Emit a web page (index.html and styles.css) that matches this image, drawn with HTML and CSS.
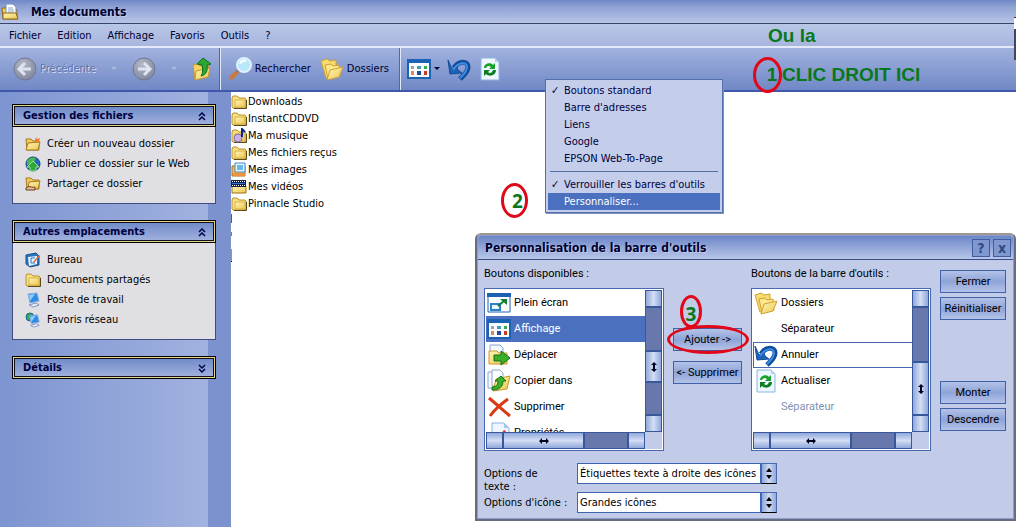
FILE: index.html
```html
<!DOCTYPE html>
<html lang="fr">
<head>
  <meta charset="UTF-8">
  <meta name="viewport" content="width=device-width, initial-scale=1.0">
  <title>Mes documents</title>
  <link rel="stylesheet" href="styles.css">
</head>
<body>
  <!-- Shared icons -->
  <svg class="sprite" aria-hidden="true">
    <defs>
      <linearGradient id="gold" x1="0" y1="0" x2="1" y2="1">
        <stop offset="0" stop-color="#fff6b8"/>
        <stop offset="1" stop-color="#ecc650"/>
      </linearGradient>
      <radialGradient id="disc" cx="0.4" cy="0.3" r="0.8">
        <stop offset="0" stop-color="#b4b8c6"/>
        <stop offset="1" stop-color="#7c839c"/>
      </radialGradient>
      <symbol id="folder" viewBox="0 0 16 16">
        <path d="M1 4l1-2h4l2 2h6l1 1v8l-1 1H2l-1-1z" fill="#f8e07c" stroke="#b89030"/>
        <path d="M4 6h10v7H4z" fill="url(#gold)" stroke="#d8b048"/>
        <path d="M15.500 6v8.500H3" fill="none" stroke="#5c4c1c"/>
      </symbol>
      <symbol id="folders" viewBox="0 0 24 24">
        <path d="M1 4l6-2 3 2 6-1v4l2 12-12 2z" fill="#f8dc70" stroke="#d0a030"/>
        <path d="M5 8l6-1 2 2 6-1 1 11-12 3z" fill="#fbe78c" stroke="#d0a030"/>
        <path d="M10 13l13-3-4 10-12 3z" fill="url(#gold)" stroke="#d0a030"/>
      </symbol>
      <symbol id="views" viewBox="0 0 24 20">
        <path d="M1 1h22v18H1z" fill="#f8fbff" stroke="#1c62b4" stroke-width="2"/>
        <path d="M0 0h24v4H0z" fill="#1c62b4"/>
        <path d="M4 7h3v3H4z" fill="#a0a0a8"/>
        <path d="M4 12h3v4H4z" fill="#e08850"/>
        <path d="M10 7h4v3h-4z" fill="#4498b0"/>
        <path d="M10 12h4v4h-4z" fill="#204c9c"/>
        <path d="M17 7h3v3h-3z" fill="#38a848"/>
        <path d="M17 12h3v4h-3z" fill="#c83c20"/>
      </symbol>
      <symbol id="undo" viewBox="0 0 24 24">
        <path d="M7 11C12 3 21 4 21 10c0 5-4 8-8 12" fill="none" stroke="#124c9c" stroke-width="5"/>
        <path d="M1 3l2 14 12-1-4-3-1-3-5 2z" fill="#1e62b8" stroke="#124c9c"/>
        <path d="M6 13C11 5 20 4 20 10c0 5-4 8-7 11" fill="none" stroke="#3c8ce0" stroke-width="2"/>
      </symbol>
      <symbol id="refresh" viewBox="0 0 20 24">
        <path d="M1 1h14l4 4v18H1z" fill="#eef6ff" stroke="#8cb4e0"/>
        <path d="M15 1v4h4z" fill="#b4d0f0"/>
        <path d="M4 11c0-5 7-6 9-3l2-2v6h-6l2-2c-2-2-4-1-5 1z" fill="#18a028"/>
        <path d="M16 13c0 6-7 7-10 4l-2 2v-6h6l-2 2c2 2 4 1 5-2z" fill="#0c8020"/>
      </symbol>
      <symbol id="updown" viewBox="0 0 8 12">
        <path d="M4 1l3 3H5v4h2l-3 3-3-3h2V4H1z" fill="#000020"/>
      </symbol>
      <symbol id="leftright" viewBox="0 0 12 8">
        <path d="M1 4l3-3v2h4V1l3 3-3 3V5H4v2z" fill="#000020"/>
      </symbol>
      <symbol id="chevrons" viewBox="0 0 8 9">
        <path d="M1 4l3-3 3 3M1 8l3-3 3 3" fill="none" stroke="#00004c" stroke-width="1.500"/>
      </symbol>
      <symbol id="monitor" viewBox="0 0 16 16">
        <path d="M3 2l9-1 2 8-9 2z" fill="#2c8ce8" stroke="#90acd8"/>
        <path d="M4 3l6-1-5 7z" fill="#8cd0ff"/>
        <path d="M4 13l7-2 3 2-6 2z" fill="#e8ecf8" stroke="#8494bc"/>
      </symbol>
    </defs>
  </svg>

  <header class="title-bar">
    <svg class="icon-18" viewBox="0 0 18 18">
      <path d="M1 5h5l1 2h9v9H2z" fill="#f0cc58" stroke="#906818"/>
      <path d="M5 1h7l3 3v8H5z" fill="#fff" stroke="#708cc0"/>
      <path d="M7 5h5M7 7h6M7 9h6" stroke="#88a4d0"/>
      <path d="M2 10h13l2 6H2z" fill="url(#gold)" stroke="#906818"/>
    </svg>
    <h1>Mes documents</h1>
  </header>

  <nav class="menu-bar">
    <a href="#">Fichier</a>
    <a href="#">Edition</a>
    <a href="#">Affichage</a>
    <a href="#">Favoris</a>
    <a href="#">Outils</a>
    <a href="#">?</a>
  </nav>

  <div class="toolbar">
    <div class="tool-group nav-tools">
      <button class="tool" disabled>
        <svg class="icon-24" viewBox="0 0 24 24">
          <circle cx="12" cy="12" r="11" fill="url(#disc)" stroke="#707890"/>
          <path d="M18 12H7M12 6l-6 6 6 6" fill="none" stroke="#e0e4f0" stroke-width="3"/>
        </svg>
        <span class="embossed">Précédente</span>
      </button>
      <svg class="drop pale" viewBox="0 0 6 4"><path d="M0 0h6L3 3z"/></svg>
      <button class="tool" aria-label="Suivante" disabled>
        <svg class="icon-24" viewBox="0 0 24 24">
          <circle cx="12" cy="12" r="11" fill="url(#disc)" stroke="#707890"/>
          <path d="M6 12h11M12 6l6 6-6 6" fill="none" stroke="#e0e4f0" stroke-width="3"/>
        </svg>
      </button>
      <svg class="drop pale" viewBox="0 0 6 4"><path d="M0 0h6L3 3z"/></svg>
      <button class="tool" aria-label="Dossier parent">
        <svg class="icon-20" viewBox="0 0 20 24">
          <path d="M1 8l5-1 2 2 8-1 1 10-14 4z" fill="#f4d464" stroke="#c89828"/>
          <path d="M4 14l14-3-2 9-13 3z" fill="url(#gold)" stroke="#c89828"/>
          <path d="M5 7l6-6 8 6-4 1c1 6-1 10-6 11 2-3 2-7 1-11z" fill="#28a830" stroke="#107018"/>
        </svg>
      </button>
    </div>
    <div class="tool-group search-tools">
      <button class="tool">
        <svg class="icon-24" viewBox="0 0 24 24">
          <path d="M2 22l8-8" stroke="#d07838" stroke-width="4"/>
          <path d="M9 15l3-3" stroke="#6c84b8" stroke-width="3"/>
          <circle cx="16" cy="8" r="7" fill="#b8e8fc" stroke="#e0f0ff" stroke-width="2"/>
          <path d="M12 7c1-3 4-4 6-3" fill="none" stroke="#fff" stroke-width="2"/>
        </svg>
        Rechercher
      </button>
      <button class="tool">
        <svg class="icon-24"><use href="#folders"/></svg>
        Dossiers
      </button>
    </div>
    <div class="tool-group view-tools">
      <button class="tool" aria-label="Affichage">
        <svg class="icon-24"><use href="#views"/></svg>
        <svg class="drop" viewBox="0 0 6 4"><path d="M0 0h6L3 3z"/></svg>
      </button>
      <button class="tool" aria-label="Annuler"><svg class="icon-24"><use href="#undo"/></svg></button>
      <button class="tool" aria-label="Actualiser"><svg class="icon-24"><use href="#refresh"/></svg></button>
    </div>
  </div>

  <main class="content">
    <aside class="sidebar">
      <section class="panel">
        <h2>Gestion des fichiers <svg class="chevron"><use href="#chevrons"/></svg></h2>
        <ul class="tasks">
          <li><svg class="icon-16" viewBox="0 0 16 16">
            <path d="M1 3h5l2 2h6v9H2z" fill="#f0cc58" stroke="#a87820"/>
            <path d="M3 7l12-1-2 8H1z" fill="url(#gold)" stroke="#a87820"/>
            <path d="M11 1l1 2 3-1-1 3 1 2-3-1-2 1V4z" fill="#f08030"/>
          </svg><a href="#">Créer un nouveau dossier</a></li>
          <li><svg class="icon-16" viewBox="0 0 16 16">
            <circle cx="8" cy="8" r="7" fill="#2468c0" stroke="#184880"/>
            <path d="M2 5c2-4 7-4 9-3L9 6 5 8 2 9z" fill="#48b850"/>
            <path d="M8 5l6 6h-3v4H5v-4H2z" fill="#30a838" stroke="#a0e098"/>
          </svg><a href="#">Publier ce dossier sur le Web</a></li>
          <li><svg class="icon-16" viewBox="0 0 16 16">
            <path d="M1 2h5l2 2h6v9H2z" fill="#f0cc58" stroke="#a87820"/>
            <path d="M4 6l11-1-2 8H3z" fill="url(#gold)" stroke="#a87820"/>
            <path d="M1 12c3-3 5 0 9-1v3H1z" fill="#e8b890" stroke="#684020"/>
          </svg><a href="#">Partager ce dossier</a></li>
        </ul>
      </section>

      <section class="panel">
        <h2>Autres emplacements <svg class="chevron"><use href="#chevrons"/></svg></h2>
        <ul class="tasks">
          <li><svg class="icon-16" viewBox="0 0 16 16">
            <path d="M1 3l10-2 3 3v9l-9 2-4-3z" fill="#2878c0" stroke="#185090"/>
            <path d="M3 5l9-1v8l-8 2z" fill="#e8f4ff"/>
            <path d="M10 6H6v5h4" fill="none" stroke="#2878c0"/>
            <path d="M8 10l6-7 1 1-6 7z" fill="#d86838"/>
          </svg><a href="#">Bureau</a></li>
          <li><svg class="icon-16"><use href="#folder"/></svg><a href="#">Documents partagés</a></li>
          <li><svg class="icon-16"><use href="#monitor"/></svg><a href="#">Poste de travail</a></li>
          <li><svg class="icon-16" viewBox="0 0 16 16">
            <circle cx="5" cy="5" r="4" fill="#38a850" stroke="#186890"/>
            <use href="#monitor" x="2" y="2" width="14" height="14"/>
          </svg><a href="#">Favoris réseau</a></li>
        </ul>
      </section>

      <section class="panel">
        <h2>Détails <svg class="chevron flipped"><use href="#chevrons"/></svg></h2>
      </section>
    </aside>

    <ul class="files">
      <li><svg class="icon-16"><use href="#folder"/></svg>Downloads</li>
      <li><svg class="icon-16"><use href="#folder"/></svg>InstantCDDVD</li>
      <li><svg class="icon-16" viewBox="0 0 16 16">
        <use href="#folder"/>
        <circle cx="7" cy="10" r="4" fill="#c8b0e8" stroke="#8070b0"/>
        <path d="M11 9V1l3 3" fill="none" stroke="#102880" stroke-width="2"/>
      </svg>Ma musique</li>
      <li><svg class="icon-16"><use href="#folder"/></svg>Mes fichiers reçus</li>
      <li><svg class="icon-16" viewBox="0 0 16 16">
        <path d="M1 4h13v10H1z" fill="#f0c050" stroke="#a07018"/>
        <path d="M4 1h10v9H4z" fill="#eaf6ff" stroke="#3c88c8"/>
        <path d="M6 3h6v5H6z" fill="#68b8e8"/>
        <path d="M2 11h12v3H2z" fill="#f09040"/>
      </svg>Mes images</li>
      <li><svg class="icon-16" viewBox="0 0 16 16">
        <path d="M1 7h14v7H1z" fill="url(#gold)" stroke="#a07018"/>
        <path d="M0 1h15v7H0z" fill="#102050"/>
        <path d="M1 2.500h14M1 6.500h14" stroke="#fff" stroke-dasharray="1 1"/>
        <path d="M1 4h13v1H1z" fill="#3870d0"/>
      </svg>Mes vidéos</li>
      <li><svg class="icon-16"><use href="#folder"/></svg>Pinnacle Studio</li>
      <li><svg class="sliver" viewBox="0 0 2 54">
        <path d="M0 2h1v9H0z" fill="#506080"/>
        <path d="M0 20h1v4H0z" fill="#e04890"/>
        <path d="M0 37h1v12H0z" fill="#b89848"/>
        <path d="M0 49h1v1H0z" fill="#101010"/>
      </svg></li>
    </ul>
  </main>

  <ul class="context-menu" role="menu">
    <li role="menuitemcheckbox" aria-checked="true" class="checked">Boutons standard</li>
    <li role="menuitem">Barre d'adresses</li>
    <li role="menuitem">Liens</li>
    <li role="menuitem">Google</li>
    <li role="menuitem">EPSON Web-To-Page</li>
    <li role="separator" class="separator"></li>
    <li role="menuitemcheckbox" aria-checked="true" class="checked">Verrouiller les barres d'outils</li>
    <li role="menuitem" class="active">Personnaliser...</li>
  </ul>

  <section class="dialog" role="dialog" aria-labelledby="dialogTitle">
    <header class="dialog-title">
      <h2 id="dialogTitle">Personnalisation de la barre d'outils</h2>
      <button class="caption-button">?</button>
      <button class="caption-button">x</button>
    </header>

    <div class="dialog-body">
      <div class="list-column">
        <span id="availableLabel">Boutons disponibles :</span>
        <div class="list-box">
          <ul class="options" role="listbox" aria-labelledby="availableLabel">
            <li role="option"><svg class="icon-24" viewBox="0 0 24 20">
              <path d="M1 1h22v18H1z" fill="#fff" stroke="#1c62b4"/>
              <path d="M0 0h24v4H0z" fill="#1c62b4"/>
              <path d="M4 11h9v6H4z" fill="#e8f4ff" stroke="#2c80c8" stroke-width="2"/>
              <path d="M11 13l6-5" stroke="#108038" stroke-width="2"/>
              <path d="M13 6h7v6z" fill="#108038"/>
            </svg>Plein écran</li>
            <li role="option" aria-selected="true" class="selected"><svg class="icon-24"><use href="#views"/></svg>Affichage</li>
            <li role="option"><svg class="icon-24" viewBox="0 0 24 24">
              <path d="M3 2h10l3 3v12H3z" fill="#f4f8ff" stroke="#8ca4cc"/>
              <path d="M2 8h8l2 2h8v11H2z" fill="url(#gold)" stroke="#c89828"/>
              <path d="M7 12h7V8l9 7-9 7v-4H7z" fill="#38b028" stroke="#147018"/>
            </svg>Déplacer</li>
            <li role="option"><svg class="icon-24" viewBox="0 0 24 24">
              <path d="M1 3h9l3 3v13H1z" fill="#f4f8ff" stroke="#8ca4cc"/>
              <path d="M5 1h8l3 3v13H5z" fill="#fff" stroke="#8ca4cc"/>
              <path d="M9 10l14-3-3 13-14 2z" fill="url(#gold)" stroke="#c89828"/>
              <path d="M5 18c5 0 6-3 6-6H8l6-5 5 5h-3c0 6-4 9-11 9z" fill="#38b028" stroke="#147018"/>
            </svg>Copier dans</li>
            <li role="option"><svg class="icon-24" viewBox="0 0 24 24">
              <path d="M2 3C8 8 16 15 23 21M21 4C14 9 8 14 3 21" fill="none" stroke="#dc3814" stroke-width="3"/>
            </svg>Supprimer</li>
            <li role="option"><svg class="icon-24" viewBox="0 0 24 24">
              <path d="M5 2h12l5 5v16H5z" fill="#f0f6ff" stroke="#8cb0dc"/>
              <path d="M17 2v5h5z" fill="#a8c8ec"/>
              <path d="M13 14l4-5 2 1-3 6z" fill="#e03830"/>
            </svg>Propriétés</li>
          </ul>
          <div class="scroll-y">
            <i class="end"></i>
            <i class="track track-44"></i>
            <i class="thumb"><svg class="grip"><use href="#updown"/></svg></i>
            <i class="track track-33"></i>
            <i class="end"></i>
          </div>
          <div class="scroll-x">
            <i class="end"></i>
            <i class="thumb"><svg class="grip"><use href="#leftright"/></svg></i>
            <i class="track track-44"></i>
            <i class="end"></i>
          </div>
        </div>
      </div>

      <div class="transfer">
        <button class="push">Ajouter -&gt;</button>
        <button class="push">&lt;- Supprimer</button>
      </div>

      <div class="list-column">
        <span id="currentLabel">Boutons de la barre d'outils :</span>
        <div class="list-box">
          <ul class="options" role="listbox" aria-labelledby="currentLabel">
            <li role="option"><svg class="icon-24"><use href="#folders"/></svg>Dossiers</li>
            <li role="option"><i class="icon-24"></i>Séparateur</li>
            <li role="option" class="focused"><svg class="icon-24"><use href="#undo"/></svg>Annuler</li>
            <li role="option"><svg class="icon-24"><use href="#refresh"/></svg>Actualiser</li>
            <li role="option" class="muted"><i class="icon-24"></i>Séparateur</li>
          </ul>
          <div class="scroll-y">
            <i class="end"></i>
            <i class="track track-55"></i>
            <i class="thumb"><svg class="grip"><use href="#updown"/></svg></i>
            <i class="end"></i>
          </div>
          <div class="scroll-x">
            <i class="end"></i>
            <i class="thumb"><svg class="grip"><use href="#leftright"/></svg></i>
            <i class="track track-44"></i>
            <i class="end"></i>
          </div>
        </div>
      </div>

      <div class="side-buttons">
        <div class="button-pair">
          <button class="push">Fermer</button>
          <button class="push">Réinitialiser</button>
        </div>
        <div class="button-pair">
          <button class="push">Monter</button>
          <button class="push">Descendre</button>
        </div>
      </div>
    </div>

    <form class="dialog-options">
      <label for="textOptions">Options de texte :</label>
      <div class="select-wrap">
        <select id="textOptions"><option>Étiquettes texte à droite des icônes</option></select>
        <span class="spinner"><svg viewBox="0 0 6 11"><path d="M3 0l3 4H0zM0 7h6l-3 4z"/></svg></span>
      </div>
      <label for="iconOptions">Options d'icône :</label>
      <div class="select-wrap">
        <select id="iconOptions"><option>Grandes icônes</option></select>
        <span class="spinner"><svg viewBox="0 0 6 11"><path d="M3 0l3 4H0zM0 7h6l-3 4z"/></svg></span>
      </div>
    </form>
  </section>

  <!-- Tutorial notes over the window -->
  <p class="note note-or">Ou la</p>
  <p class="note note-click"><span class="ring ring-1">1</span>CLIC DROIT ICI</p>
  <p class="note note-2 ring">2</p>
  <p class="note note-3 ring">3</p>
  <div class="ring ring-add"></div>
  <div class="edge-mark"></div>
</body>
</html>
```

FILE: styles.css
```css
* {
  margin: 0;
  padding: 0;
  box-sizing: border-box;
}

body {
  position: relative;
  display: flex;
  flex-direction: column;
  min-height: 100vh;
  overflow: hidden;
  background: #fff;
  color: #000;
  font-family: "DejaVu Sans Condensed", Tahoma, sans-serif;
  font-size: 11px;
  line-height: 14px;
}

ul {
  list-style: none;
}

a {
  color: inherit;
  text-decoration: none;
}

button,
select {
  font: inherit;
  color: inherit;
}

.sprite {
  position: absolute;
  width: 0;
  height: 0;
}

.icon-16, .icon-18, .icon-20, .icon-24 {
  flex: none;
  display: block;
}

.icon-16 { width: 16px; height: 16px; }
.icon-18 { width: 18px; height: 18px; }
.icon-20 { width: 20px; height: 24px; }
.icon-24 { width: 24px; height: 24px; }

/* Title and menus */
.title-bar {
  display: flex;
  align-items: center;
  gap: 12px;
  height: 24px;
  padding-left: 1px;
  background: linear-gradient(#7088c8, #8ea2d4 30%, #b8c4e6);
  border-bottom: 1px solid #38446c;
}

.title-bar h1,
.dialog-title h2 {
  color: #000030;
  font-size: 12px;
  font-weight: bold;
  text-shadow: 1px 1px #c0ccec;
}

.menu-bar {
  display: flex;
  align-items: center;
  gap: 16px;
  height: 24px;
  padding: 1px 0 0 9px;
  background: linear-gradient(#b8c6e6, #a8b6de);
  border-bottom: 2px solid #e4eafa;
  color: #000030;
}

/* Toolbar */
.toolbar {
  display: flex;
  height: 44px;
  background: linear-gradient(#a2b2de, #7088c6);
  border-bottom: 2px solid #4058ac;
  color: #000030;
}

.tool-group {
  display: flex;
  align-items: center;
  border-right: 1px solid #e0e8fa;
  box-shadow: inset -1px 0 #5068a8;
}

.tool-group:last-child {
  border-right: 0;
  box-shadow: none;
}

.nav-tools {
  gap: 15px;
  padding: 0 8px 0 13px;
}

.search-tools {
  gap: 9px;
  padding: 0 11px 0 7px;
}

.view-tools {
  gap: 7px;
  padding-left: 6px;
}

.tool {
  display: flex;
  align-items: center;
  gap: 3px;
  background: none;
  border: 0;
}

.embossed {
  color: #6074ac;
  text-shadow: 1px 1px #d0daf2;
}

.drop {
  width: 6px;
  height: 4px;
  fill: #000030;
}

.drop.pale {
  fill: #b0bce0;
}

/* Explorer area */
.content {
  flex: 1;
  display: flex;
}

.sidebar {
  width: 231px;
  display: flex;
  flex-direction: column;
  gap: 16px;
  padding: 12px 15px 12px 12px;
  background: linear-gradient(90deg, #7c94d0, #a2b2e0 208px, #7c92ce 208px);
}

.panel h2 {
  display: flex;
  align-items: center;
  justify-content: space-between;
  height: 23px;
  padding: 1px 9px 0 10px;
  background: linear-gradient(#6c88c8, #a4b4de);
  border: 1px solid #000;
  box-shadow: inset 0 0 0 1px #e4d484, inset 0 0 0 2px #101020;
  color: #000040;
  font-size: 11px;
}

.chevron {
  width: 8px;
  height: 9px;
}

.chevron.flipped {
  transform: rotate(180deg);
}

.tasks {
  padding: 7px 12px 9px;
  background: #e0e0e4;
  border: 1px solid #404c80;
  border-top: 0;
}

.tasks li {
  display: flex;
  align-items: center;
  gap: 6px;
  height: 20px;
}

.files {
  flex: 1;
  padding-top: 1px;
}

.files li {
  display: flex;
  align-items: center;
  gap: 1px;
  height: 17px;
}

.sliver {
  width: 2px;
  height: 54px;
  align-self: flex-start;
}

/* Toolbar context menu */
.context-menu {
  position: absolute;
  top: 79px;
  left: 545px;
  width: 178px;
  padding: 2px;
  background: #c4ceea;
  border: 1px solid #5070b0;
  box-shadow: 1px 1px #8090b8;
  color: #000040;
}

.context-menu li {
  position: relative;
  height: 17px;
  padding-left: 16px;
  line-height: 17px;
}

.context-menu .checked::before {
  content: "✓";
  position: absolute;
  left: 3px;
  font-weight: bold;
}

.context-menu .separator {
  height: 5px;
  margin: 0 2px 4px;
  border-bottom: 1px solid #5070a8;
}

.context-menu .active {
  background: #4c70c0;
  color: #fff;
}

/* Customise dialog */
.dialog {
  position: absolute;
  top: 233px;
  right: 0;
  background: #c2cce8;
  border: 2px solid #686c80;
  border-top-color: #a09890;
  border-radius: 6px 6px 0 0;
  box-shadow: inset 0 0 0 1px #8c9ccc;
  padding: 1px;
}

.dialog-title {
  display: flex;
  align-items: center;
  gap: 3px;
  height: 24px;
  padding: 0 2px 0 7px;
  background: linear-gradient(#6c86c8, #b8c6e8);
  border-bottom: 1px solid #384c88;
  border-radius: 3px 3px 0 0;
}

.dialog-title h2 {
  flex: 1;
}

.caption-button {
  width: 18px;
  height: 18px;
  background: #8098d0;
  border: 1px solid #405ca0;
  color: #304880;
  font-size: 14px;
  font-weight: bold;
  line-height: 14px;
}

.dialog-body {
  display: flex;
  gap: 9px;
  padding: 7px 7px 12px 6px;
  font-family: Roboto, "Liberation Sans", sans-serif;
}

.list-column {
  display: flex;
  flex-direction: column;
  gap: 7px;
}

.list-box {
  display: grid;
  grid-template: 142px 17px / 159px 17px;
  padding: 1px;
  border: 1px solid #4868b0;
  background: linear-gradient(#c2cce8, #c2cce8) content-box, #fff;
}

.options {
  overflow: hidden;
  background: #fff;
}

.options li {
  display: flex;
  align-items: center;
  gap: 3px;
  height: 26px;
  padding-left: 1px;
}

.options .selected {
  background: #4c70c0;
  color: #fff;
}

.options .focused {
  border: 1px solid #4868b0;
  border-right: 0;
  padding-left: 0;
}

.options .muted {
  color: #8090b0;
}

.scroll-y,
.scroll-x {
  display: flex;
}

.scroll-y {
  flex-direction: column;
}

.scroll-y i,
.scroll-x i {
  display: flex;
  align-items: center;
  justify-content: center;
  border: 1px solid #38589c;
}

.scroll-y .end, .scroll-y .thumb { background: linear-gradient(90deg, #90a8dc, #d4def4, #90a8dc); }
.scroll-x .end, .scroll-x .thumb { background: linear-gradient(#90a8dc, #d4def4, #90a8dc); }
.scroll-y .end { height: 17px; }
.scroll-x .end { width: 17px; }
.scroll-y .thumb, .scroll-x .thumb { flex: 1; }
.scroll-y .track, .scroll-x .track { background: #6878ac; }
.scroll-y .track-33 { height: 33px; }
.scroll-y .track-44 { height: 44px; }
.scroll-y .track-55 { height: 55px; }
.scroll-x .track-44 { width: 44px; }
.scroll-y .grip { width: 8px; height: 12px; }
.scroll-x .grip { width: 12px; height: 8px; }

.push {
  height: 23px;
  background: linear-gradient(#b4c2e8, #8ea4d8 50%, #b4c2e8);
  border: 1px solid #4060a8;
  white-space: nowrap;
}

.transfer {
  display: flex;
  flex-direction: column;
  gap: 10px;
  width: 69px;
  padding-top: 61px;
}

.side-buttons {
  display: flex;
  flex-direction: column;
  justify-content: space-between;
  width: 66px;
  padding: 3px 0 20px;
}

.button-pair {
  display: flex;
  flex-direction: column;
  gap: 4px;
}

.dialog-options {
  display: grid;
  grid-template-columns: 93px 200px;
  row-gap: 8px;
  padding: 0 6px 5px;
}

.dialog-options label {
  height: 21px;
  padding: 4px 24px 0 0;
  line-height: 13px;
}

.dialog-options label:last-of-type {
  padding-right: 0;
}

.select-wrap {
  display: flex;
  height: 21px;
}

.select-wrap select {
  appearance: none;
  flex: 1;
  min-width: 0;
  padding-left: 2px;
  background: #fff;
  border: 1px solid #3c64b0;
  border-radius: 0;
}

.spinner {
  display: flex;
  align-items: center;
  justify-content: center;
  width: 16px;
  background: linear-gradient(90deg, #90a8dc, #d0daf2, #90a8dc);
  border: 1px solid #4868b0;
  border-bottom-color: #000;
  pointer-events: none;
}

.spinner svg {
  width: 6px;
  height: 11px;
}

/* Tutorial notes */
.note {
  position: absolute;
  color: #08781c;
  font-family: "Liberation Sans", Arial, sans-serif;
  font-size: 19px;
  font-weight: bold;
  line-height: 22px;
}

.ring {
  display: flex;
  align-items: center;
  justify-content: center;
  border: 3px solid #e00818;
  border-radius: 50%;
}

.note-or {
  top: 25px;
  left: 768px;
}

.note-click {
  display: flex;
  align-items: center;
  top: 57px;
  left: 753px;
}

.ring-1 {
  width: 29px;
  height: 36px;
  padding-left: 9px;
}

.note-2 {
  top: 183px;
  left: 501px;
  width: 27px;
  height: 35px;
  padding-left: 6px;
  font-family: "Open Sans", sans-serif;
}

.note-3 {
  top: 295px;
  left: 680px;
  width: 22px;
  height: 33px;
  padding-top: 4px;
  font-family: "Open Sans", sans-serif;
}

.ring-add {
  position: absolute;
  top: 325px;
  left: 667px;
  width: 82px;
  height: 29px;
}

.edge-mark {
  position: absolute;
  top: 17px;
  right: 0;
  width: 2px;
  height: 43px;
  background: linear-gradient(#fff 11px, #404860 11px);
  border-top: 1px solid #202840;
}
```
